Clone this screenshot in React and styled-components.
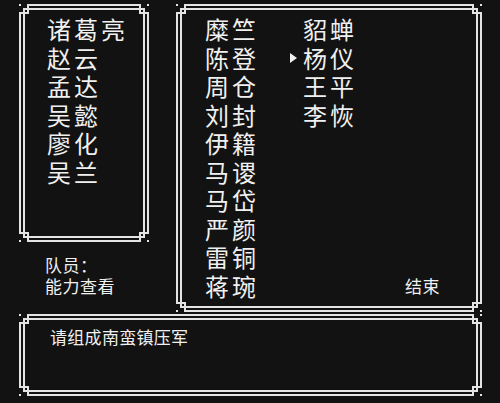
import styled, { createGlobalStyle } from 'styled-components'

const GlobalStyle = createGlobalStyle`
  html, body {
    margin: 0;
    background: #121212;
  }
  body {
    font-family: "Noto Sans CJK SC", "Noto Sans", sans-serif;
    color: #f0f0f0;
  }
`

const line = '#e4e4e4'
const bg = '#121212'

const Screen = styled.div`
  width: 500px;
  height: 403px;
  box-sizing: border-box;
  padding: 4px 18px 0 19px;
  display: grid;
  grid-template-columns: 130px 306px;
  grid-template-rows: 308px 82px;
  column-gap: 27px;
  row-gap: 2px;
  background: ${bg};
`

const Side = styled.div`
  display: flex;
  flex-direction: column;
`

const Frame = styled.div`
  position: relative;
  box-sizing: border-box;
  border: 6px double ${line};
  background: ${bg};
  height: ${(p) => p.$height || 'auto'};
  grid-column: ${(p) => (p.$wide ? '1 / -1' : 'auto')};
`

const CornerBox = styled.svg`
  position: absolute;
  width: 10px;
  height: 10px;
  background: ${bg};
  ${(p) => (p.$top ? 'top: -6px;' : 'bottom: -6px;')}
  ${(p) => (p.$left ? 'left: -6px;' : 'right: -6px;')}
  transform: scale(${(p) => (p.$left ? 1 : -1)}, ${(p) => (p.$top ? 1 : -1)});
`

function Corner({ top, left }) {
  return (
    <CornerBox $top={top} $left={left} viewBox="0 0 10 10" fill={line}>
      <rect x="0" y="0" width="2" height="2" />
      <rect x="4" y="4" width="6" height="2" />
      <rect x="4" y="4" width="2" height="6" />
      <rect x="4" y="8" width="6" height="2" />
      <rect x="8" y="4" width="2" height="6" />
      <rect x="8" y="0" width="2" height="4" />
      <rect x="0" y="8" width="4" height="2" />
    </CornerBox>
  )
}

function Corners() {
  return (
    <>
      <Corner top left />
      <Corner top />
      <Corner left />
      <Corner />
    </>
  )
}

const NameList = styled.div`
  display: flex;
  flex-direction: column;
  font-size: 24px;
  line-height: 28.5px;
  letter-spacing: 3px;
  white-space: nowrap;
  padding: ${(p) => p.$pad || '0'};
`

const Roster = styled.div`
  display: flex;
  height: 100%;
  box-sizing: border-box;
  padding: 5px 36px 6px 23px;
`

const PickRow = styled.div`
  display: flex;
  align-items: center;
`

const Cursor = styled.span`
  width: 16px;
  flex: none;
  display: flex;
  align-items: center;
  padding-left: 3px;
  box-sizing: border-box;

  &::before {
    content: '';
    display: ${(p) => (p.$on ? 'block' : 'none')};
    width: 0;
    height: 0;
    border-top: 5px solid transparent;
    border-bottom: 5px solid transparent;
    border-left: 7px solid #f0f0f0;
  }
`

const SecondColumn = styled(NameList)`
  margin-left: 28px;
`

const EndLabel = styled.div`
  margin-left: auto;
  align-self: flex-end;
  font-size: 17px;
  line-height: 28.5px;
  letter-spacing: 0.5px;
`

const Info = styled.div`
  margin-top: 12px;
  padding-left: 26px;
  font-size: 17px;
  line-height: 21px;
  letter-spacing: 0.5px;
`

const Message = styled.div`
  padding: 6px 25px;
  font-size: 17px;
  line-height: 21px;
  letter-spacing: 0.3px;
`

const party = ['诸葛亮', '赵云', '孟达', '吴懿', '廖化', '吴兰']
const officers = ['糜竺', '陈登', '周仓', '刘封', '伊籍', '马谡', '马岱', '严颜', '雷铜', '蒋琬']
const picked = ['貂蝉', '杨仪', '王平', '李恢']

export default function App() {
  return (
    <>
      <GlobalStyle />
      <Screen>
        <Side>
          <Frame $height="238px">
            <Corners />
            <NameList $pad="5px 0 0 22px">
              {party.map((name) => (
                <span key={name}>{name}</span>
              ))}
            </NameList>
          </Frame>
          <Info>
            <div>队员：</div>
            <div>能力查看</div>
          </Info>
        </Side>
        <Frame>
          <Corners />
          <Roster>
            <NameList>
              {officers.map((name) => (
                <span key={name}>{name}</span>
              ))}
            </NameList>
            <SecondColumn>
              {picked.map((name, i) => (
                <PickRow key={name}>
                  <Cursor $on={i === 1} />
                  {name}
                </PickRow>
              ))}
            </SecondColumn>
            <EndLabel>结束</EndLabel>
          </Roster>
        </Frame>
        <Frame $wide>
          <Corners />
          <Message>请组成南蛮镇压军</Message>
        </Frame>
      </Screen>
    </>
  )
}
